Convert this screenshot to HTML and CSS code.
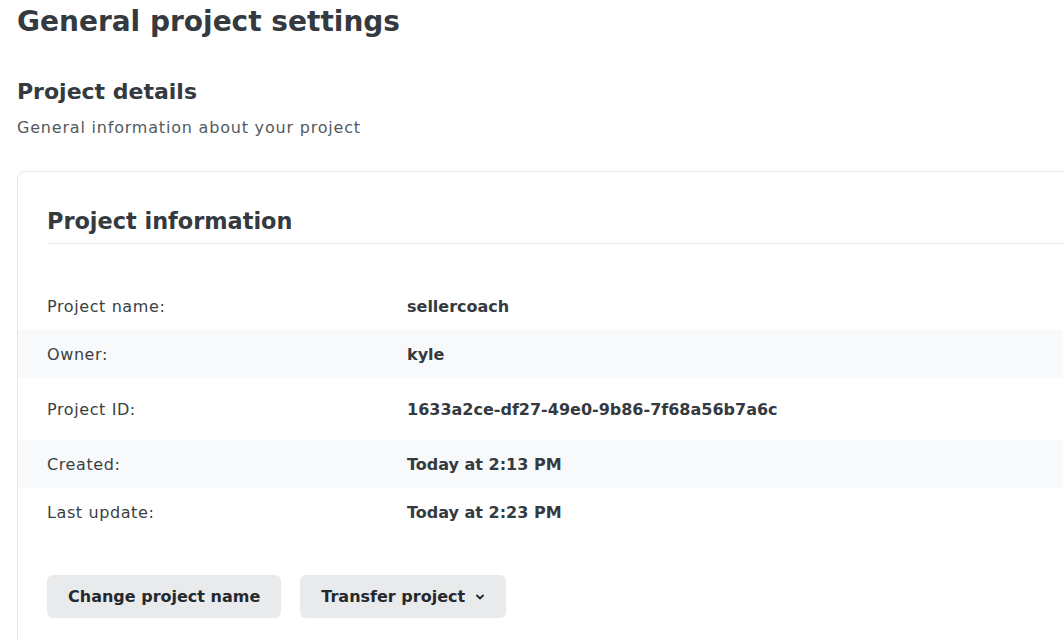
FILE: index.html
```html
<!DOCTYPE html>
<html lang="en">
<head>
<meta charset="utf-8">
<title>General project settings</title>
<link rel="stylesheet" href="styles.css">
</head>
<body>
<main class="page">
  <h1 class="page-title">General project settings</h1>
  <section class="section">
    <h2 class="section-title">Project details</h2>
    <p class="section-desc">General information about your project</p>
    <div class="card">
      <h3 class="card-title">Project information</h3>
      <dl class="info">
        <div class="row"><dt>Project name:</dt><dd>sellercoach</dd></div>
        <div class="row striped"><dt>Owner:</dt><dd>kyle</dd></div>
        <div class="row tall"><dt>Project ID:</dt><dd>1633a2ce-df27-49e0-9b86-7f68a56b7a6c</dd></div>
        <div class="row striped"><dt>Created:</dt><dd>Today at 2:13 PM</dd></div>
        <div class="row"><dt>Last update:</dt><dd>Today at 2:23 PM</dd></div>
      </dl>
      <div class="actions">
        <button class="btn" type="button">Change project name</button>
        <button class="btn" type="button">Transfer project
          <svg class="chev" width="10" height="10" viewBox="0 0 10 10" aria-hidden="true"><path d="M2 3.5 L5 6.5 L8 3.5" fill="none" stroke="currentColor" stroke-width="1.9" stroke-linecap="round" stroke-linejoin="round"/></svg>
        </button>
      </div>
    </div>
  </section>
</main>
</body>
</html>
```
FILE: styles.css
```css
* { box-sizing: border-box; }
html, body { margin: 0; padding: 0; background: #fff; overflow: hidden; }
body {
  font-family: "DejaVu Sans", "Noto Sans CJK KR", sans-serif;
  color: #343a40;
}
.page { padding: 0 0 0 17px; }
.page-title {
  margin: 0;
  padding-top: 2px;
  font-size: 28px;
  line-height: 40px;
  font-weight: 700;
  color: #343a40;
}
.section { margin-top: 34px; }
.section-title {
  margin: 0;
  font-size: 22px;
  line-height: 32px;
  font-weight: 700;
  color: #343a40;
}
.section-desc {
  margin: 8px 0 0;
  font-size: 16px;
  line-height: 24px;
  letter-spacing: 0.8px;
  color: #555a60;
}
.card {
  margin-top: 31px;
  width: 1100px;
  border: 1px solid #e6e7e8;
  border-radius: 8px;
  padding-top: 29px;
  padding-bottom: 40px;
}
.card-title {
  margin: 0 0 0 29px;
  font-size: 22.4px;
  line-height: 40px;
  font-weight: 700;
  color: #343a40;
  padding-bottom: 2px;
  border-bottom: 1px solid #e6e7e8;
}
.info { margin: 38px 0 0; }
.row {
  display: grid;
  grid-template-columns: 360px 1fr;
  align-items: center;
  height: 48px;
  padding-left: 29px;
}
.row.tall { height: 62px; }
.row.striped { background: #f8f9fa; }
.row dt { font-size: 16px; letter-spacing: 0.6px; color: #3a3f44; }
.row dd { margin: 0; font-size: 16px; font-weight: 700; color: #343a40; }
.actions {
  display: flex;
  gap: 19px;
  margin-top: 39px;
  padding-left: 29px;
}
.btn {
  display: inline-flex;
  align-items: center;
  gap: 10px;
  height: 43px;
  padding: 0 21px;
  border: 0;
  border-radius: 6px;
  background: #e9eaec;
  font-family: inherit;
  font-size: 16px;
  font-weight: 700;
  color: #25292d;
}
.chev { display: block; }
```
